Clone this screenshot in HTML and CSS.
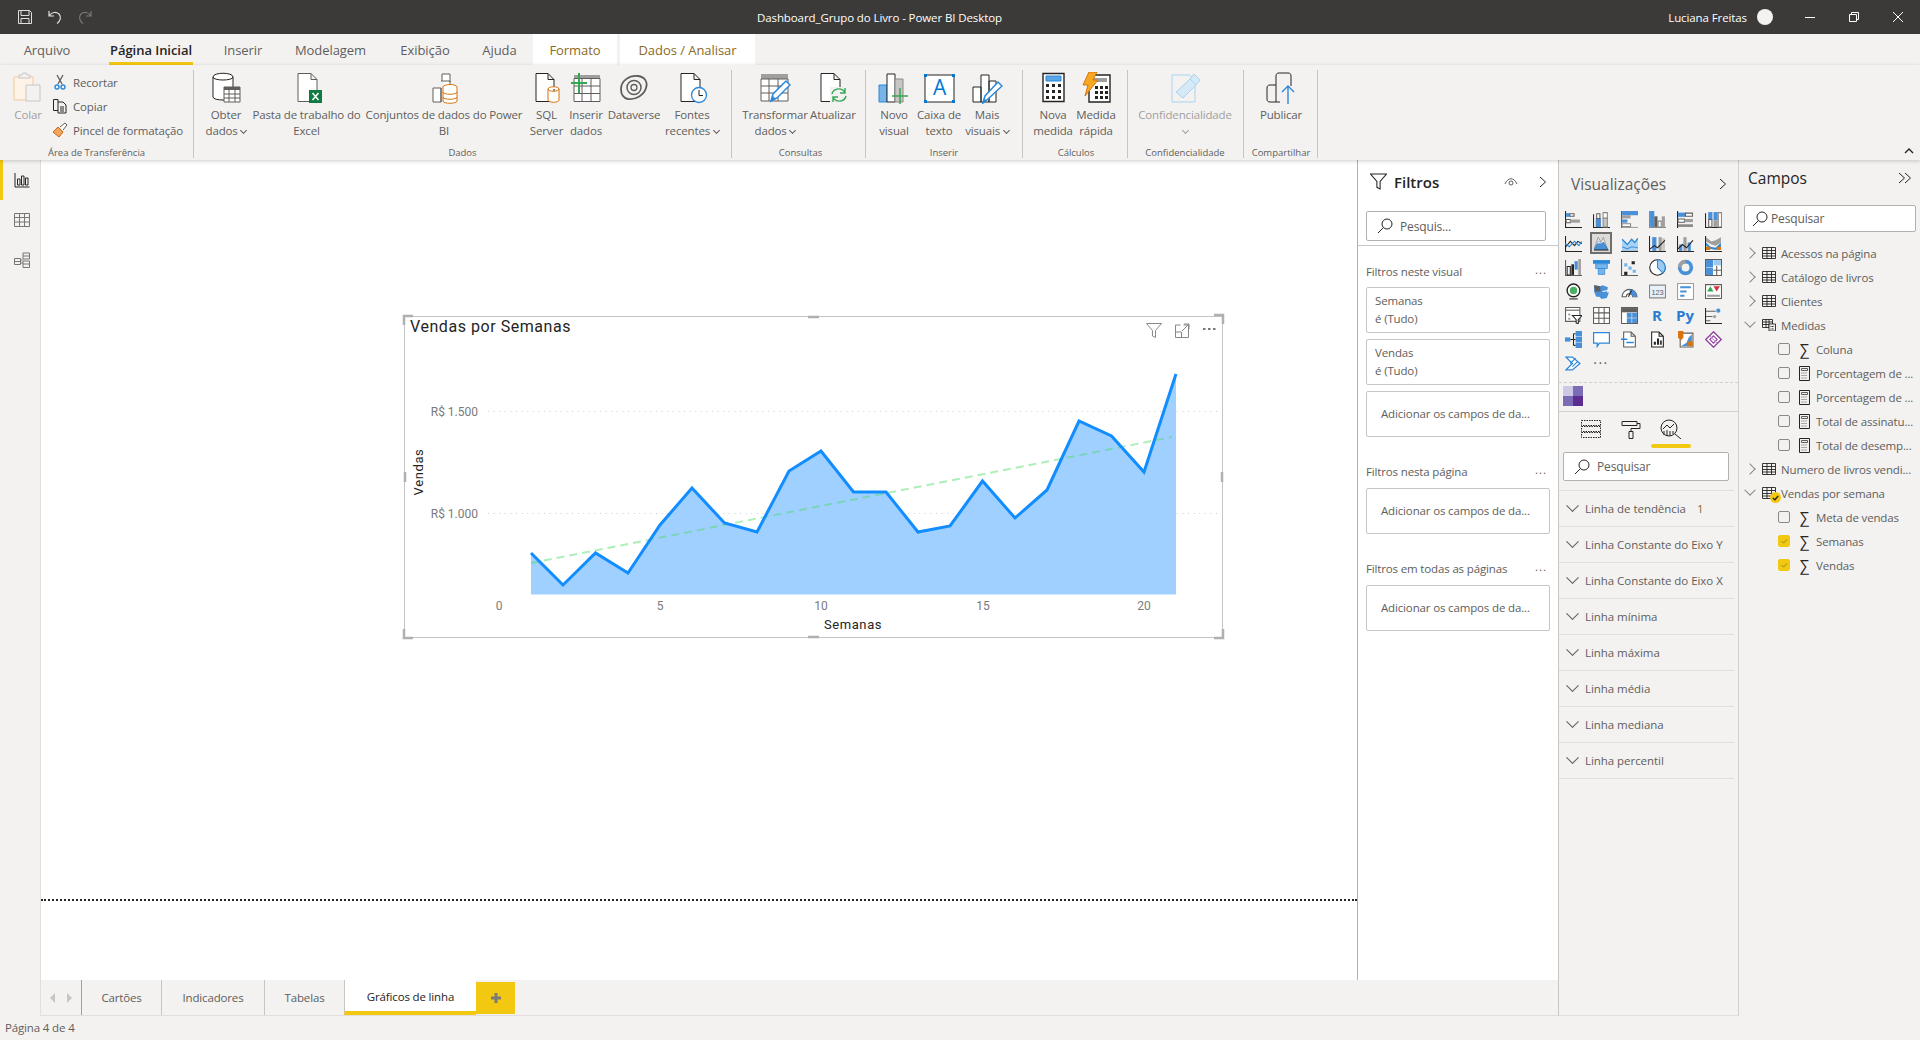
FILE: index.html
```html
<!DOCTYPE html>
<html lang="pt-BR">
<head>
<meta charset="utf-8">
<title>Dashboard_Grupo do Livro - Power BI Desktop</title>
<link rel="stylesheet" href="styles.css">
</head>
<body>
<header class="titlebar">
  <div class="qat">
    <svg class="qi" viewBox="0 0 16 16"><path d="M1.500 1.500h11l2 2v11h-13z M4 1.500v5h8v-5 M4 14.500v-5h8v5" fill="none" stroke="#e1dfdd"/></svg>
    <svg class="qi" viewBox="0 0 16 16"><path d="M2 2v5h5 M2.500 6.500C5 3 9 2.500 12 5c2.500 3 1.500 7-2 9.500" fill="none" stroke="#e1dfdd" stroke-width="1.200"/></svg>
    <svg class="qi" viewBox="0 0 16 16"><path d="M14 2v5H9 M13.500 6.500C11 3 7 2.500 4 5c-2.500 3-1.500 7 2 9.500" fill="none" stroke="#7a7876" stroke-width="1.200"/></svg>
  </div>
  <div class="doc">Dashboard_Grupo do Livro - Power BI Desktop</div>
  <div class="user">Luciana Freitas</div>
  <div class="avatar"></div>
  <div class="winbtns">
    <svg class="wi" viewBox="0 0 12 12"><path d="M1 6.500h10" stroke="#fff" fill="none"/></svg>
    <svg class="wi" viewBox="0 0 12 12"><path d="M1.500 3.500h7v7h-7z M3.500 3.500v-2h7v7h-2" stroke="#fff" fill="none"/></svg>
    <svg class="wi" viewBox="0 0 12 12"><path d="M1 1l10 10M11 1L1 11" stroke="#fff" fill="none"/></svg>
  </div>
</header>

<nav class="tabs">
  <span class="tab t-arq">Arquivo</span>
  <span class="tab t-home">Página Inicial</span>
  <span class="tab t-ins">Inserir</span>
  <span class="tab t-mod">Modelagem</span>
  <span class="tab t-exi">Exibição</span>
  <span class="tab t-aju">Ajuda</span>
  <span class="tab ctx t-for">Formato</span>
  <span class="tab ctx t-dad">Dados / Analisar</span>
</nav>

<section class="ribbon">
  <div class="group g-clip">
    <div class="grow">
      <div class="btn w-colar off">
        <svg class="ic" viewBox="0 0 32 32"><path d="M2 5h19v23H2z" fill="#fdf3e6" stroke="#f0c9a0"/><path d="M7 5V3h3l1-2h3l1 2h3v3H7z" fill="#f3f2f1" stroke="#c8c6c4"/><path d="M14 13h14v16H14z" fill="#f3f2f1" stroke="#c8c6c4"/></svg>
        <span>Colar</span>
      </div>
      <div class="cliplist">
        <div class="clip"><svg class="ci" viewBox="0 0 16 16"><path d="M5 1l5 9M11 1L6 10" stroke="#605e5c" fill="none" stroke-width="1.300"/><circle cx="5" cy="13" r="2" fill="none" stroke="#2b88d8" stroke-width="1.400"/><circle cx="11" cy="13" r="2" fill="none" stroke="#2b88d8" stroke-width="1.400"/></svg><span>Recortar</span></div>
        <div class="clip"><svg class="ci" viewBox="0 0 16 16"><path d="M6 4V1.500H1.500v11H6" fill="none" stroke="#252423"/><path d="M6 4h5l3 3v8H6z M8 9h4M8 11h4M8 13h4" fill="none" stroke="#252423"/></svg><span>Copiar</span></div>
        <div class="clip"><svg class="ci" viewBox="0 0 16 16"><path d="M1 10l5-5 5 5-4 5z" fill="#f2a65a" stroke="#c8641e"/><path d="M8 5l5-4 2 2-4 5" fill="#fff" stroke="#605e5c"/></svg><span>Pincel de formatação</span></div>
      </div>
    </div>
    <div class="glabel">Área de Transferência</div>
  </div>

  <div class="group g-dados">
    <div class="grow">
      <div class="btn w-obter">
        <svg class="ic" viewBox="0 0 32 32"><path d="M3 5c0-5 20-5 20 0v20c0 4-20 4-20 0z" fill="#fff" stroke="#252423"/><path d="M3 5c0 4 20 4 20 0" fill="none" stroke="#252423"/><path d="M14 15h16v15H14z" fill="#fff" stroke="#605e5c"/><path d="M14 15h16v3H14z" fill="#605e5c"/><path d="M19 18v12M25 18v12M14 22h16M14 26h16" stroke="#605e5c" fill="none"/></svg>
        <span>Obter</span><span>dados <i class="caret"></i></span>
      </div>
      <div class="btn w-pasta">
        <svg class="ic" viewBox="0 0 32 32"><path d="M7 1.500h13l6 6v22H7z M20 1.500v6h6" fill="#fff" stroke="#605e5c"/><path d="M18 18h13v13H18z" fill="#107c41"/><path d="M21.500 21l6 7M27.500 21l-6 7" stroke="#fff" stroke-width="1.500"/></svg>
        <span>Pasta de trabalho do</span><span>Excel</span>
      </div>
      <div class="btn w-conj">
        <svg class="ic" viewBox="0 0 32 32"><path d="M5 16h8v14H5z M13 9h9v8 M14 9V2h8v8" fill="#fff" stroke="#605e5c"/><path d="M13 30V16" stroke="#605e5c"/><ellipse cx="22" cy="15" rx="7" ry="2.500" fill="#fff" stroke="#d9730d"/><path d="M15 15v14c0 3 14 3 14 0V15M15 20c0 3 14 3 14 0M15 25c0 3 14 3 14 0" fill="#fff" stroke="#d9730d"/></svg>
        <span>Conjuntos de dados do Power</span><span>BI</span>
      </div>
      <div class="btn w-sql">
        <svg class="ic" viewBox="0 0 32 32"><path d="M5 1.500h12l6 6v22H5z M17 1.500v6h6" fill="#fff" stroke="#252423"/><path d="M17 17c0-3 11-3 11 0v11c0 3-11 3-11 0z M17 17c0 3 11 3 11 0" fill="#fff" stroke="#d9730d"/></svg>
        <span>SQL</span><span>Server</span>
      </div>
      <div class="btn w-ins">
        <svg class="ic" viewBox="0 0 32 32"><path d="M4 3h26v4H4z" fill="#a19f9d"/><path d="M4 6.500h26v23H4z M12 6.500v23M21 6.500v23M4 14h26M4 21.500h26" fill="#fff" stroke="#605e5c"/><path d="M1 11h16M9 1v20" stroke="#33a853" stroke-width="2" fill="none"/></svg>
        <span>Inserir</span><span>dados</span>
      </div>
      <div class="btn w-dat">
        <svg class="ic" viewBox="0 0 32 32"><path d="M3 17C3 9 11 3 20 4c7 1 10 6 8 12-2 7-10 12-18 11-5-1-7-5-7-10z" fill="none" stroke="#605e5c" stroke-width="1.800"/><circle cx="16" cy="15.500" r="7" fill="none" stroke="#605e5c" stroke-width="1.500"/><circle cx="16" cy="15.500" r="3" fill="none" stroke="#605e5c" stroke-width="1.300"/></svg>
        <span>Dataverse</span>
      </div>
      <div class="btn w-fon">
        <svg class="ic" viewBox="0 0 32 32"><path d="M5 1.500h13l6 6v22H5z M18 1.500v6h6" fill="#fff" stroke="#252423"/><circle cx="23" cy="23" r="7.500" fill="#fff" stroke="#2b88d8" stroke-width="1.300"/><path d="M23 18v5.500h4" fill="none" stroke="#252423"/></svg>
        <span>Fontes</span><span>recentes <i class="caret"></i></span>
      </div>
    </div>
    <div class="glabel">Dados</div>
  </div>

  <div class="group g-cons">
    <div class="grow">
      <div class="btn w-tra">
        <svg class="ic" viewBox="0 0 32 32"><path d="M2 2h27v5H2z" fill="#a19f9d"/><path d="M2 7h27v22H2z M10 7v22M19 7v22M2 14h27M2 21h27" fill="#fff" stroke="#605e5c"/><path d="M12 29l2-7 13-13 4 4-13 13z" fill="#fff" stroke="#2b88d8" stroke-width="1.500"/><path d="M12 29l2-5 3 3z" fill="#2b88d8"/></svg>
        <span>Transformar</span><span>dados <i class="caret"></i></span>
      </div>
      <div class="btn w-atu">
        <svg class="ic" viewBox="0 0 32 32"><path d="M4 1.500h13l6 6v22H4z M17 1.500v6h6" fill="#fff" stroke="#252423"/><rect x="13" y="15" width="17" height="16" fill="#f3f2f1"/><path d="M15 22c1-5 8-7 12-3l1 2M29 24c-1 5-8 7-12 3l-1-2M28 16v5h-5M16 30v-5h5" fill="none" stroke="#33a853" stroke-width="1.400"/></svg>
        <span>Atualizar</span>
      </div>
    </div>
    <div class="glabel">Consultas</div>
  </div>

  <div class="group g-ins">
    <div class="grow">
      <div class="btn w-nov">
        <svg class="ic" viewBox="0 0 32 32"><path d="M1 13h8v17H1z" fill="#76b4ea" stroke="#2b88d8"/><path d="M9 2h8v28H9z" fill="#fff" stroke="#252423"/><path d="M17 7h8v23h-8z" fill="#c8c6c4" stroke="#8a8886"/><path d="M14 24h16M22 16v16" stroke="#33a853" stroke-width="1.500"/></svg>
        <span>Novo</span><span>visual</span>
      </div>
      <div class="btn w-cai">
        <svg class="ic" viewBox="0 0 32 32"><path d="M2 3h29v27H2z" fill="#fff" stroke="#252423"/><path d="M1 2h3v3H1zM29 2h3v3h-3zM1 28h3v3H1zM29 28h3v3h-3z" fill="#0078d4"/><text class="ic-a" x="16.500" y="23">A</text></svg>
        <span>Caixa de</span><span>texto</span>
      </div>
      <div class="btn w-mai">
        <svg class="ic" viewBox="0 0 32 32"><path d="M2 15h8v15H2z M10 3h8v27h-8z M18 9h7v21h-7z" fill="#fff" stroke="#252423"/><path d="M12 31l2-7 13-14 4 4-14 13z" fill="#fff" stroke="#2b88d8" stroke-width="1.500"/><path d="M11 31l2-5 3 3z" fill="#2b88d8"/></svg>
        <span>Mais</span><span>visuais <i class="caret"></i></span>
      </div>
    </div>
    <div class="glabel">Inserir</div>
  </div>

  <div class="group g-cal">
    <div class="grow">
      <div class="btn w-nom">
        <svg class="ic" viewBox="0 0 32 32"><path d="M6 1.500h21v28H6z" fill="#fff" stroke="#252423" stroke-width="1.400"/><path d="M9 4h15v5H9z" fill="#5ba4e6" stroke="#2b88d8"/><path d="M9 12h3v3H9zM15 12h3v3h-3zM21 12h3v3h-3zM9 18h3v3H9zM15 18h3v3h-3zM21 18h3v3h-3zM9 24h3v3H9zM15 24h3v3h-3zM21 24h3v3h-3z" fill="#252423"/></svg>
        <span>Nova</span><span>medida</span>
      </div>
      <div class="btn w-med">
        <svg class="ic" viewBox="0 0 32 32"><path d="M9 3h21v27H9z" fill="#fff" stroke="#252423" stroke-width="1.400"/><path d="M13 6h14v4H13z" fill="#a19f9d"/><path d="M15 14h3v3h-3zM20 14h3v3h-3zM25 14h3v3h-3zM15 19h3v3h-3zM20 19h3v3h-3zM25 19h3v3h-3zM15 24h3v3h-3zM20 24h3v3h-3zM25 24h3v3h-3z" fill="#252423"/><path d="M9 0h8l-4 8h5L5 24l3-11H3z" fill="#f7a823" stroke="#d9730d"/></svg>
        <span>Medida</span><span>rápida</span>
      </div>
    </div>
    <div class="glabel">Cálculos</div>
  </div>

  <div class="group g-con">
    <div class="grow">
      <div class="btn w-con off">
        <svg class="ic" viewBox="0 0 32 32"><path d="M3 3h17l6 4v23H3z" fill="#f3f2f1" stroke="#a9d3ef"/><path d="M7 20L21 7l6 6-13 13z" fill="#d6e9f6" stroke="#a9d3ef"/><path d="M21 7l4-5 6 6-4 5z" fill="#d6e9f6" stroke="#a9d3ef"/></svg>
        <span>Confidencialidade</span><span><i class="caret"></i></span>
      </div>
    </div>
    <div class="glabel">Confidencialidade</div>
  </div>

  <div class="group g-sha">
    <div class="grow">
      <div class="btn w-pub">
        <svg class="ic" viewBox="0 0 32 32"><path d="M2 16c0-2 1-3 3-3h6V4c0-2 1-3 3-3h9c2 0 3 1 3 3v26H5c-2 0-3-1-3-3zM11 13v17" fill="none" stroke="#252423"/><rect x="15" y="14" width="15" height="18" fill="#f3f2f1"/><path d="M23 32V14M17 20l6-6 6 6" fill="none" stroke="#2b88d8" stroke-width="1.400"/></svg>
        <span>Publicar</span>
      </div>
    </div>
    <div class="glabel">Compartilhar</div>
  </div>
  <svg class="collapse" viewBox="0 0 10 6"><path d="M1 5l4-4 4 4" fill="none" stroke="#252423" stroke-width="1.400"/></svg>
</section>

<main class="main">
  <aside class="leftnav">
    <div class="nav-item active"><svg class="ni" viewBox="0 0 16 16"><path d="M1 1v14h14.500" fill="none" stroke="#252423"/><path d="M3.500 7h2.500v6H3.500zM7.500 4H10v9H7.500zM11.500 6H14v7h-2.500z" fill="none" stroke="#252423"/></svg></div>
    <div class="nav-item"><svg class="ni" viewBox="0 0 16 16"><path d="M.5 1.500h15v13H.5zM5.500 1.500v13M10.500 1.500v13M.5 5.500h15M.5 10h15" fill="none" stroke="#797775"/></svg></div>
    <div class="nav-item"><svg class="ni" viewBox="0 0 16 16"><path d="M.5 6.500h6v6h-6zM.5 9.500h6M9 1h6.500v6H9zM9 4h6.500M9 9h6.500v6.500H9zM9 12h6.500M6.500 8H9M6.500 11H9" fill="none" stroke="#797775"/></svg></div>
  </aside>

  <div class="center">
    <div class="work">
      <div class="canvas">
        <div class="visual">
          <svg class="chart" viewBox="400 313 828 330">
            <rect class="frame" x="404.500" y="317.500" width="818" height="321"/>
            <text class="ct" x="410" y="333">Vendas por Semanas</text>
            <path class="grid" d="M488 412.500H1218M488 514.500H1218"/>
            <text class="yl" x="478" y="416.500">R$ 1.500</text>
            <text class="yl" x="478" y="518.500">R$ 1.000</text>
            <text class="at" transform="translate(423 473) rotate(-90)">Vendas</text>
            <path class="area" d="M531 554L563 586L595.500 554L628 574L660 526L692 489L724.500 524L757 533L789 472L821 452L853.500 493L886 493L918 533L950 527L982.500 482L1015 519L1047 491L1079 422L1111.500 437L1144 473L1176 375V595.500H531Z"/>
            <path class="trend" d="M531 564L1172 438"/>
            <path class="line" d="M531 554L563 586L595.500 554L628 574L660 526L692 489L724.500 524L757 533L789 472L821 452L853.500 493L886 493L918 533L950 527L982.500 482L1015 519L1047 491L1079 422L1111.500 437L1144 473L1176 375"/>
            <text class="xl" x="499" y="611">0</text>
            <text class="xl" x="660" y="611">5</text>
            <text class="xl" x="821" y="611">10</text>
            <text class="xl" x="983" y="611">15</text>
            <text class="xl" x="1144" y="611">20</text>
            <text class="at" x="853" y="630">Semanas</text>
            <path class="vi" d="M1146.500 324.500h15l-6 7v7l-3-1.500v-5.500z"/>
            <path class="vi" d="M1175.500 326v12.500h13v-12.500h-5M1175.500 326h5M1175.500 333h6v5.500M1182 332l6.500-6.500M1184 325h5v5"/>
            <path class="dots" d="M1203 330h2.500M1208 330h2.500M1213 330h2.500"/>
            <path class="hnd" d="M404 326v-9h9M1214 316h9v9M1223 630v9h-9M413 639h-9v-9" />
            <path class="hnd" d="M808 318h11M808 638h11M405 473v10M1222 473v10"/>
          </svg>
        </div>
        <div class="pageline"></div>
      </div>
      <aside class="filters">
        <div class="f-head">
          <svg class="f-fun" viewBox="0 0 16 16"><path d="M.5 1h15l-6 7v7l-3-1.500V8z" fill="none" stroke="#252423"/></svg>
          <span class="f-title">Filtros</span>
          <svg class="f-eye" viewBox="0 0 14 10"><path d="M1 7c3-7 9-7 12 0" fill="none" stroke="#605e5c"/><circle cx="7" cy="6" r="2" fill="none" stroke="#605e5c"/></svg>
          <svg class="chev" viewBox="0 0 8 12"><path d="M1 1l5.500 5L1 11" fill="none" stroke="#252423"/></svg>
        </div>
        <div class="search f-search">
          <svg class="mag" viewBox="0 0 16 16"><circle cx="10" cy="6" r="5" fill="none" stroke="#252423"/><path d="M6.500 9.500L1 15" stroke="#252423" fill="none"/></svg>
          <span>Pesquis...</span>
        </div>
        <div class="f-body">
          <div class="f-sec"><span>Filtros neste visual</span><i class="more">...</i></div>
          <div class="f-card"><span>Semanas</span><span>é (Tudo)</span></div>
          <div class="f-card"><span>Vendas</span><span>é (Tudo)</span></div>
          <div class="f-card add">Adicionar os campos de da...</div>
          <div class="f-sec s2"><span>Filtros nesta página</span><i class="more">...</i></div>
          <div class="f-card add">Adicionar os campos de da...</div>
          <div class="f-sec s3"><span>Filtros em todas as páginas</span><i class="more">...</i></div>
          <div class="f-card add">Adicionar os campos de da...</div>
        </div>
      </aside>
    </div>
    <div class="pagetabs">
      <div class="arrows"><i class="al"></i><i class="ar"></i></div>
      <div class="ptab p1">Cartões</div>
      <div class="ptab p2">Indicadores</div>
      <div class="ptab p3">Tabelas</div>
      <div class="ptab p4">Gráficos de linha</div>
      <div class="padd"><svg viewBox="0 0 12 12"><path d="M6 1v10M1 6h10" stroke="#7a7a78" stroke-width="3"/></svg></div>
    </div>
  </div>

  <aside class="viz">
    <div class="v-head"><span>Visualizações</span><svg class="chev" viewBox="0 0 8 12"><path d="M1 1l5.500 5L1 11" fill="none" stroke="#252423"/></svg></div>
    <div class="v-grid">
      <div class="vc"><svg viewBox="0 0 16 16"><path d="M.5 0v15.500H16" stroke="#252423" fill="none"/><path d="M1 2h3.500v3.500H1z" fill="#4a90d9"/><path d="M4.500 2.500H8.500v2.500H4.500z" fill="#fff" stroke="#605e5c"/><path d="M1 8h4v3H1z" fill="#fff" stroke="#605e5c"/><path d="M5 8h9v3H5z" fill="#a19f9d"/></svg></div>
      <div class="vc"><svg viewBox="0 0 16 16"><path d="M0 15.500h16M.5 3v12" stroke="#252423" fill="none"/><path d="M3 7h4v8H3z" fill="#4a90d9" stroke="#2b6cb0" stroke-width=".6"/><path d="M3.500 2.500h3V7h-3z" fill="#fff" stroke="#605e5c"/><path d="M9.500 6.500h4v8.500h-4z" fill="#c8c6c4" stroke="#8a8886"/><path d="M9.500 1.500h4v5h-4z" fill="#fff" stroke="#8a8886"/></svg></div>
      <div class="vc"><svg viewBox="0 0 16 16"><path d="M.5 0v16" stroke="#605e5c"/><path d="M1 0h15v4H1z" fill="#4a90d9"/><path d="M1 4h8v3H1z" fill="#a19f9d"/><path d="M1 8h5v3H1z" fill="#4a90d9"/><path d="M1 12h8v2.500H1z" fill="#fff" stroke="#8a8886"/><path d="M1 15h15v1H1z" fill="#a19f9d"/></svg></div>
      <div class="vc"><svg viewBox="0 0 16 16"><path d="M0 0h1v16H0zM0 15h16v1H0z" fill="#8a8886"/><path d="M1 0h4v15H1z" fill="#4a90d9"/><path d="M5 5h3v10H5z" fill="#605e5c"/><path d="M8.500 9.500h3V15h-3z" fill="#fff" stroke="#8a8886"/><path d="M12 5h3v10h-3z" fill="#a19f9d"/></svg></div>
      <div class="vc"><svg viewBox="0 0 16 16"><path d="M.5 0v16" stroke="#252423"/><path d="M1 1.500h7v4H1z" fill="#4a90d9"/><path d="M8 2h6.500v3H8z" fill="#fff" stroke="#605e5c"/><path d="M1 7.500h6v3H1z" fill="#fff" stroke="#605e5c"/><path d="M7 7.500h8v3H7z" fill="#a19f9d"/><path d="M1 12.500h14V15H1z" fill="#8a8886"/></svg></div>
      <div class="vc"><svg viewBox="0 0 16 16"><path d="M.5 2v14M0 15.500h16" stroke="#252423" fill="none"/><path d="M3 1h4v7H3z" fill="#4a90d9"/><path d="M3.500 8h3v7h-3z" fill="#fff" stroke="#605e5c"/><path d="M8 1h4v8H8z" fill="#4a90d9"/><path d="M8 9h4v6H8z" fill="#a19f9d"/><path d="M12.500 1.500h3V15h-3z" fill="#fff" stroke="#8a8886"/></svg></div>

      <div class="vc"><svg viewBox="0 0 16 16"><path d="M.5 1v14.500H16" stroke="#252423" fill="none"/><path d="M0 12l5-6 4 4 3-4 4 2" fill="none" stroke="#252423"/><path d="M0 8l4 3 5-5 4 4 3-4" fill="none" stroke="#2b88d8"/></svg></div>
      <div class="vc sel"><svg viewBox="0 0 16 16"><path d="M.5 15L5 2l3 5 2.500-5L15 15z" fill="#eee" stroke="#8a8886" stroke-width=".8"/><path d="M.5 15l5-9 3 3 2-2 5 8z" fill="#4a90d9" stroke="#2b6cb0" stroke-width=".7"/><path d="M5.500 6L4 9l2-1 2 1z" fill="#fff"/><path d="M0 15.500h16" stroke="#252423"/></svg></div>
      <div class="vc"><svg viewBox="0 0 16 16"><path d="M1 4l5 5 4-5 3 3 3-4v12H1z" fill="#a9d3f5"/><path d="M1 4l5 5 4-5 3 3 3-4" fill="none" stroke="#2b88d8" stroke-width="1.200"/><path d="M1 11l5 2 4-2 6 1" fill="none" stroke="#4a90d9"/><path d="M0 15.500h16" stroke="#252423"/></svg></div>
      <div class="vc"><svg viewBox="0 0 16 16"><path d="M.5 1v14.500H16" stroke="#252423" fill="none"/><path d="M3 2h4v13H3z" fill="#4a90d9"/><path d="M9 2h3v13H9z" fill="#a19f9d"/><path d="M12.500 3h2.500v12h-2.500z" fill="#c8c6c4"/><path d="M0 14l5-4 3 2 7-7" fill="none" stroke="#252423"/></svg></div>
      <div class="vc"><svg viewBox="0 0 16 16"><path d="M.5 1v14.500H16" stroke="#252423" fill="none"/><path d="M2 9h3v6H2z" fill="#4a90d9"/><path d="M6 2h3v13H6z" fill="#a19f9d"/><path d="M10 7h3v8h-3z" fill="#4a90d9"/><path d="M0 14l5-5 4 3 6-7" fill="none" stroke="#252423"/></svg></div>
      <div class="vc"><svg viewBox="0 0 16 16"><path d="M.5 1v14.500H16" stroke="#252423" fill="none"/><path d="M1 2l5 4 4-1 5-3v5l-5 3-4-1-5-3z" fill="#a19f9d"/><path d="M1 7l4 4 5 1 5-5v4l-5 3-5-1-4-3z" fill="#2b88d8"/><path d="M1 11h4v3H1zM11 11h4v3h-4z" fill="#d9730d"/></svg></div>

      <div class="vc"><svg viewBox="0 0 16 16"><path d="M.5 1v14.500H16" stroke="#605e5c" fill="none"/><path d="M2 7h3v8H2z" fill="none" stroke="#252423"/><path d="M6 5h2.500v10H6z" fill="#252423"/><path d="M9 2h3v8H9z" fill="#4a90d9"/><path d="M12.500 0H15v15h-2.500z" fill="#a19f9d"/></svg></div>
      <div class="vc"><svg viewBox="0 0 16 16"><path d="M0 1h16v3.500H0z" fill="#2b88d8"/><path d="M2.500 4.500h11V9h-11z" fill="#76b4ea" stroke="#2b88d8" stroke-width=".7"/><path d="M5 9h6v5.500H5z" fill="#76b4ea" stroke="#2b88d8" stroke-width=".7"/></svg></div>
      <div class="vc"><svg viewBox="0 0 16 16"><path d="M.5 0v15.500H16" stroke="#605e5c" fill="none"/><path d="M10 2h3v3h-3zM3 12h3v3H3z" fill="#252423"/><path d="M3 4h3v3H3zM7 7h3v3H7zM11 10h3v3h-3z" fill="#76b4ea"/></svg></div>
      <div class="vc"><svg viewBox="0 0 16 16"><circle cx="8" cy="8" r="7.300" fill="#fff" stroke="#252423"/><path d="M8 8V.7a7.300 7.300 0 0 1 5 12.500z" fill="#9cc9f0" stroke="#2b88d8"/></svg></div>
      <div class="vc"><svg viewBox="0 0 16 16"><circle cx="8" cy="8" r="5.500" fill="none" stroke="#4a90d9" stroke-width="3.500"/><path d="M2.500 8A5.500 5.500 0 0 1 8 2.500" fill="none" stroke="#a19f9d" stroke-width="3.500"/></svg></div>
      <div class="vc"><svg viewBox="0 0 16 16"><path d="M.5.500h15v15H.5z" fill="#fff" stroke="#605e5c"/><path d="M1 1h6.500v7H1zM1 8.500h6.500V15H1z" fill="#4a90d9"/><path d="M8 1h7v5H8z" fill="#9cc9f0"/><path d="M11 6.500V15M8 10.500h7" stroke="#605e5c"/></svg></div>

      <div class="vc"><svg viewBox="0 0 16 16"><circle cx="8" cy="7" r="6" fill="#fff" stroke="#252423" stroke-width="1.300"/><circle cx="8" cy="7" r="3.500" fill="#4caf63"/><path d="M4 15h8" stroke="#252423"/></svg></div>
      <div class="vc"><svg viewBox="0 0 16 16"><path d="M1 2l6 1 2-1 5 2-1 5h2l-2 5-5 1-2-2-3 0-2-5z" fill="#4a90d9"/><path d="M1 2l6 1v5H2z" fill="#605e5c"/><path d="M9 8l5-1" stroke="#fff"/></svg></div>
      <div class="vc"><svg viewBox="0 0 16 16"><path d="M1 13a7 7 0 0 1 14 0h-4a3 3 0 0 0-6 0z" fill="#fff" stroke="#605e5c"/><path d="M8 6a7 7 0 0 1 7 7h-4a3 3 0 0 0-3-3z" fill="#4a90d9"/><path d="M7 13l3-6" stroke="#252423"/></svg></div>
      <div class="vc"><svg viewBox="0 0 16 16"><path d="M.5 2h15v12H.5z" fill="#e6f1fa" stroke="#8a8886"/><text class="vt123" x="8" y="11">123</text></svg></div>
      <div class="vc"><svg viewBox="0 0 16 16"><path d="M.5.500h15v15H.5z" fill="#fff" stroke="#a19f9d"/><path d="M3 3h10v2H3zM3 7h6v2H3zM3 11h4v2H3z" fill="#4a90d9"/></svg></div>
      <div class="vc"><svg viewBox="0 0 16 16"><path d="M.5 1.500h15v13H.5z" fill="#fff" stroke="#605e5c"/><path d="M2 8l3-5 3 5z" fill="#33a853"/><path d="M8 3h6l-3 5z" fill="#d13438"/><path d="M2 11h12v2H2z" fill="#a19f9d"/></svg></div>

      <div class="vc"><svg viewBox="0 0 16 16"><path d="M.5.500H14v13H.5z" fill="#fff" stroke="#605e5c"/><path d="M.5 3h13.500" stroke="#605e5c"/><path d="M3 6h2v2H3zM3 10h2v2H3z" fill="#a19f9d"/><path d="M7 8h9l-3.500 4v4l-2-1v-3z" fill="#fff" stroke="#252423"/></svg></div>
      <div class="vc"><svg viewBox="0 0 16 16"><path d="M.5.500h15v15H.5zM5.500.5v15M10.500.5v15M.5 5.500h15M.5 10.500h15" fill="#fff" stroke="#605e5c"/></svg></div>
      <div class="vc"><svg viewBox="0 0 16 16"><path d="M.5.500h15v15H.5z" fill="#fff" stroke="#605e5c"/><path d="M1 1h14v4H1z" fill="#605e5c"/><path d="M5.500 5.500h4.500v4.500H5.500zM10.500 5.500H15V10h-4.500zM5.500 10.500h4.500V15H5.500zM10.500 10.500H15V15h-4.500z" fill="#4a90d9"/></svg></div>
      <div class="vc"><span class="vr">R</span></div>
      <div class="vc"><span class="vr">Py</span></div>
      <div class="vc"><svg viewBox="0 0 16 16"><path d="M.5 1v14.500H16" stroke="#252423" fill="none"/><path d="M1 4h9M1 9h6M1 13h4" stroke="#605e5c"/><circle cx="12.500" cy="3.500" r="2" fill="#4a90d9"/><circle cx="9" cy="9" r="1.500" fill="#a19f9d"/></svg></div>

      <div class="vc"><svg viewBox="0 0 16 16"><path d="M0 6h5v4H0z" fill="#4a90d9"/><path d="M5 8h3M8 2.500v11M8 2.500h2M8 8h2M8 13.500h2" stroke="#252423" fill="none"/><path d="M10 0h6v5h-6zM10 5.500h6v5h-6zM10 11h6v5h-6z" fill="#4a90d9"/></svg></div>
      <div class="vc"><svg viewBox="0 0 16 16"><path d="M.5 1.500h15v10H6l-2 3v-3H.5z" fill="#fff" stroke="#2b88d8" stroke-width="1.200"/></svg></div>
      <div class="vc"><svg viewBox="0 0 16 16"><path d="M2.500 1h7l4 4v10h-11z M9.500 1v4h4" fill="#fff" stroke="#605e5c"/><path d="M0 7h6v1.500H0z M5 10h7v1.500H5z" fill="#2b88d8"/></svg></div>
      <div class="vc"><svg viewBox="0 0 16 16"><path d="M2.500 1h7l4 4v10h-11z M9.500 1v4h4" fill="#fff" stroke="#252423"/><path d="M4.500 10h2v3h-2zM7.500 7h2v6h-2zM10.500 9h1.500v4h-1.500z" fill="#252423"/></svg></div>
      <div class="vc"><svg viewBox="0 0 16 16"><path d="M3 2h12v13H3z" fill="#fff" stroke="#605e5c"/><path d="M4 14l5-3 2-5 3-3v11z" fill="#4a90d9"/><path d="M1 0h5v6L3.500 9 1 6z" fill="#d9730d"/><circle cx="12.500" cy="12" r="2.500" fill="#d9730d"/></svg></div>
      <div class="vc"><svg viewBox="0 0 16 16"><path d="M8 .7L15.300 8 8 15.300.7 8z" fill="#fff" stroke="#8e3f9e" stroke-width="1.200"/><path d="M8 4.500L11.500 8 8 11.500 4.500 8z" fill="none" stroke="#8e3f9e"/><path d="M4.500 4.500l7 7" stroke="#c48bcf"/></svg></div>

      <div class="vc"><svg viewBox="0 0 16 16"><path d="M1 2h6l7 6-7 6H1l6-6z" fill="#fff" stroke="#2b88d8" stroke-width="1.200"/><path d="M5 8l5-5M7 11l5-5" stroke="#2b88d8"/></svg></div>
      <div class="vc"><span class="vdots">...</span></div>
    </div>
    <div class="v-dash"></div>
    <div class="v-apps">
      <div class="sq s1"></div><div class="sq s2"></div><div class="sq s3"></div><div class="sq s4"></div>
    </div>
    <div class="v-tabs">
      <div class="vt"><svg viewBox="0 0 22 20"><path d="M1.500 1.500h19v5h-19zM1.500 7.500h19v5h-19zM1.500 13.500h19v5h-19z" fill="none" stroke="#252423" stroke-dasharray="1.500 1"/></svg></div>
      <div class="vt"><svg viewBox="0 0 22 20"><path d="M2 2.500h15v4H2z M17 4.500h3v5H11v3" fill="none" stroke="#252423"/><path d="M9 12.500h4v7H9z" fill="none" stroke="#252423"/></svg></div>
      <div class="vt on"><svg viewBox="0 0 22 20"><circle cx="9" cy="9" r="8" fill="none" stroke="#252423"/><path d="M15 15l6 5" stroke="#252423"/><path d="M3 10l4-4 3 3 4-4" fill="none" stroke="#252423"/><path d="M4 12v4M7 11v6M10 12v5M13 12v3" stroke="#252423"/></svg></div>
    </div>
    <div class="search v-search">
      <svg class="mag" viewBox="0 0 16 16"><circle cx="10" cy="6" r="5" fill="none" stroke="#252423"/><path d="M6.500 9.500L1 15" stroke="#252423" fill="none"/></svg>
      <span>Pesquisar</span>
    </div>
    <div class="v-list">
      <div class="v-row"><i class="dn"></i><span>Linha de tendência</span><b class="cnt">1</b></div>
      <div class="v-row"><i class="dn"></i><span>Linha Constante do Eixo Y</span></div>
      <div class="v-row"><i class="dn"></i><span>Linha Constante do Eixo X</span></div>
      <div class="v-row"><i class="dn"></i><span>Linha mínima</span></div>
      <div class="v-row"><i class="dn"></i><span>Linha máxima</span></div>
      <div class="v-row"><i class="dn"></i><span>Linha média</span></div>
      <div class="v-row"><i class="dn"></i><span>Linha mediana</span></div>
      <div class="v-row"><i class="dn"></i><span>Linha percentil</span></div>
    </div>
  </aside>

  <aside class="fields">
    <div class="c-head"><span>Campos</span><svg class="dbl" viewBox="0 0 14 12"><path d="M1 1l5.500 5L1 11M7 1l5.500 5L7 11" fill="none" stroke="#252423"/></svg></div>
    <div class="search c-search">
      <svg class="mag" viewBox="0 0 16 16"><circle cx="10" cy="6" r="5" fill="none" stroke="#252423"/><path d="M6.500 9.500L1 15" stroke="#252423" fill="none"/></svg>
      <span>Pesquisar</span>
    </div>
    <ul class="tree">
      <li class="t"><i class="rt"></i><svg class="tb" viewBox="0 0 14 12"><path d="M.5.500h13v11H.5zM.5 3.500h13M.5 6.500h13M.5 9h13M5 .5v11M9.500.5v11" fill="none" stroke="#252423" stroke-width=".9"/></svg><span>Acessos na página</span></li>
      <li class="t"><i class="rt"></i><svg class="tb" viewBox="0 0 14 12"><path d="M.5.500h13v11H.5zM.5 3.500h13M.5 6.500h13M.5 9h13M5 .5v11M9.500.5v11" fill="none" stroke="#252423" stroke-width=".9"/></svg><span>Catálogo de livros</span></li>
      <li class="t"><i class="rt"></i><svg class="tb" viewBox="0 0 14 12"><path d="M.5.500h13v11H.5zM.5 3.500h13M.5 6.500h13M.5 9h13M5 .5v11M9.500.5v11" fill="none" stroke="#252423" stroke-width=".9"/></svg><span>Clientes</span></li>
      <li class="t"><i class="dnt"></i><svg class="tb" viewBox="0 0 14 12"><path d="M.5.500h10v8H.5zM.5 3h10M.5 5.500h10M4 .5v8M7 .5v8" fill="none" stroke="#252423" stroke-width=".9"/><path d="M7 5h6.500v7H7z" fill="#f3f2f1" stroke="#252423" stroke-width=".9"/><path d="M8.500 7.500h3.500M8.500 10h3.500" stroke="#252423" stroke-dasharray="1 .5"/></svg><span>Medidas</span></li>
      <li class="s"><i class="cb"></i><span class="sig">∑</span><span>Coluna</span></li>
      <li class="s"><i class="cb"></i><svg class="calc" viewBox="0 0 11 15"><path d="M.5.500h10v14H.5z" fill="none" stroke="#252423"/><path d="M2.500 2.500h6v2h-6z" fill="none" stroke="#605e5c"/><path d="M2.500 7h6M2.500 9.500h6M2.500 12h6" stroke="#605e5c" stroke-dasharray="1 1"/></svg><span>Porcentagem de ...</span></li>
      <li class="s"><i class="cb"></i><svg class="calc" viewBox="0 0 11 15"><path d="M.5.500h10v14H.5z" fill="none" stroke="#252423"/><path d="M2.500 2.500h6v2h-6z" fill="none" stroke="#605e5c"/><path d="M2.500 7h6M2.500 9.500h6M2.500 12h6" stroke="#605e5c" stroke-dasharray="1 1"/></svg><span>Porcentagem de ...</span></li>
      <li class="s"><i class="cb"></i><svg class="calc" viewBox="0 0 11 15"><path d="M.5.500h10v14H.5z" fill="none" stroke="#252423"/><path d="M2.500 2.500h6v2h-6z" fill="none" stroke="#605e5c"/><path d="M2.500 7h6M2.500 9.500h6M2.500 12h6" stroke="#605e5c" stroke-dasharray="1 1"/></svg><span>Total de assinatu...</span></li>
      <li class="s"><i class="cb"></i><svg class="calc" viewBox="0 0 11 15"><path d="M.5.500h10v14H.5z" fill="none" stroke="#252423"/><path d="M2.500 2.500h6v2h-6z" fill="none" stroke="#605e5c"/><path d="M2.500 7h6M2.500 9.500h6M2.500 12h6" stroke="#605e5c" stroke-dasharray="1 1"/></svg><span>Total de desemp...</span></li>
      <li class="t"><i class="rt"></i><svg class="tb" viewBox="0 0 14 12"><path d="M.5.500h13v11H.5zM.5 3.500h13M.5 6.500h13M.5 9h13M5 .5v11M9.500.5v11" fill="none" stroke="#252423" stroke-width=".9"/></svg><span>Numero de livros vendi...</span></li>
      <li class="t"><i class="dnt"></i><span class="tbwrap"><svg class="tb" viewBox="0 0 14 12"><path d="M.5.500h13v11H.5zM.5 3.500h13M.5 6.500h13M.5 9h13M5 .5v11M9.500.5v11" fill="none" stroke="#252423" stroke-width=".9"/></svg><i class="badge"><svg viewBox="0 0 10 10"><path d="M2.500 5.500l2 1.500 3-3.500" fill="none" stroke="#252423" stroke-width="1.300"/></svg></i></span><span>Vendas por semana</span></li>
      <li class="s"><i class="cb"></i><span class="sig">∑</span><span>Meta de vendas</span></li>
      <li class="s"><i class="cb ck"><svg viewBox="0 0 12 12"><path d="M3 6l2.500 2.500L9.500 4" fill="none" stroke="#8a7a3a"/></svg></i><span class="sig">∑</span><span>Semanas</span></li>
      <li class="s"><i class="cb ck"><svg viewBox="0 0 12 12"><path d="M3 6l2.500 2.500L9.500 4" fill="none" stroke="#8a7a3a"/></svg></i><span class="sig">∑</span><span>Vendas</span></li>
    </ul>
  </aside>
</main>

<footer class="status">Página 4 de 4</footer>
</body>
</html>
```

FILE: styles.css
```css
* { box-sizing: border-box; }
html, body { margin: 0; height: 100%; }
body {
  width: 1920px; height: 1040px; overflow: hidden;
  display: flex; flex-direction: column;
  background: #f3f2f1; color: #605e5c;
  font-family: "Open Sans", "Noto Sans", "Liberation Sans", sans-serif;
  font-size: 11.5px; letter-spacing: -.15px;
}
i { font-style: normal; }

/* title bar */
.titlebar { height: 34px; flex: none; background: #3b3a39; color: #fff; display: flex; align-items: center; font-size: 11.5px; letter-spacing: -.1px; }
.qat { width: 757px; display: flex; gap: 14px; padding-left: 17px; }
.qi { width: 16px; height: 16px; }
.user { margin-left: auto; }
.avatar { width: 16px; height: 16px; border-radius: 50%; background: #f3f2f1; margin: 0 31px 0 10px; }
.winbtns { display: flex; gap: 32px; padding-right: 16px; }
.wi { width: 12px; height: 12px; }

/* ribbon tabs */
.tabs { height: 31px; flex: none; display: flex; align-items: stretch; font-size: 13px; color: #605e5c; position: relative; z-index: 2; letter-spacing: -.05px; }
.tab { display: flex; align-items: center; justify-content: center; height: 31px; white-space: nowrap; }
.t-arq { margin-left: 23px; width: 48px; }
.t-home { margin-left: 38px; width: 84px; color: #252423; font-weight: 600; border-bottom: 3px solid #f2c811; padding-top: 3px; }
.t-ins { margin-left: 31px; width: 38px; }
.t-mod { margin-left: 32px; width: 73px; }
.t-exi { margin-left: 33px; width: 50px; }
.t-aju { margin-left: 32px; width: 35px; }
.ctx { background: #fff; color: #8a6a1f; }
.t-for { margin-left: 16px; width: 84px; }
.t-dad { margin-left: 3px; width: 135px; }

/* ribbon */
.ribbon { height: 95px; flex: none; display: flex; position: relative; z-index: 2; padding-top: 5px; box-shadow: 0 1px 4px rgba(0,0,0,.2); background: #f3f2f1; }
.group { height: 88px; display: flex; flex-direction: column; border-right: 1px solid #c8c6c4; position: relative; }
.grow { flex: 1; display: flex; align-items: flex-start; }
.glabel { height: 11px; text-align: center; font-size: 9.5px; line-height: 11px; color: #605e5c; letter-spacing: 0; }
.g-clip { width: 194px; }
.g-dados { width: 538px; padding-left: 6px; }
.g-cons { width: 134px; padding-left: 10px; }
.g-ins { width: 157px; padding-left: 6px; }
.g-cal { width: 105px; padding-left: 8px; }
.g-con { width: 116px; padding-left: 5px; }
.g-sha { width: 74px; padding-left: 7px; }
.g-dados .glabel, .g-cons .glabel, .g-ins .glabel, .g-cal .glabel, .g-con .glabel, .g-sha .glabel { margin-left: -6px; }
.btn { display: flex; flex-direction: column; align-items: center; white-space: nowrap; line-height: 16px; color: #605e5c; flex: none; }
.ic { width: 32px; height: 32px; margin: 2px 0 3px; flex: none; }
.off { color: #a19f9d; }
.caret { display: inline-block; width: 5px; height: 5px; border: solid currentColor; border-width: 0 1px 1px 0; transform: rotate(45deg); margin: 0 0 2px 1px; }
.w-colar { width: 40px; margin-left: 8px; }
.w-obter { width: 52px; }
.w-pasta { width: 109px; }
.w-conj { width: 166px; }
.w-sql { width: 39px; }
.w-ins { width: 40px; }
.w-dat { width: 56px; }
.w-fon { width: 60px; }
.w-tra { width: 66px; }
.w-atu { width: 50px; }
.w-nov { width: 44px; }
.w-cai { width: 46px; }
.w-mai { width: 50px; }
.w-nom { width: 44px; }
.w-med { width: 42px; }
.w-con { width: 104px; }
.w-pub { width: 60px; }
.ic-a { font-size: 21px; fill: #0078d4; text-anchor: middle; }
.cliplist { display: flex; flex-direction: column; gap: 8px; margin: 4px 0 0 4px; }
.clip { display: flex; align-items: center; gap: 5px; height: 16px; white-space: nowrap; }
.ci { width: 16px; height: 16px; flex: none; }
.collapse { position: absolute; right: 6px; bottom: 6px; width: 10px; height: 6px; }

/* main */
.main { flex: 1; display: flex; min-height: 0; }
.leftnav { width: 41px; flex: none; border-right: 1px solid #e1dfdd; display: flex; flex-direction: column; }
.nav-item { height: 40px; display: flex; align-items: center; justify-content: center; border-left: 3px solid transparent; }
.nav-item.active { border-left-color: #f2c811; }
.ni { width: 16px; height: 16px; }
.center { width: 1517px; flex: none; display: flex; flex-direction: column; }
.work { flex: 1; display: flex; min-height: 0; }
.canvas { flex: 1; background: #fff; position: relative; }
.visual { position: absolute; left: 359px; top: 152px; width: 828px; height: 330px; }
.chart { display: block; width: 828px; height: 330px; font-family: Roboto, "Noto Sans", sans-serif; letter-spacing: 0; }
.frame { fill: none; stroke: #c4c4c4; }
.ct { font-size: 16px; fill: #252423; letter-spacing: .55px; }
.grid { stroke: #ccc; stroke-dasharray: 1 4.6; fill: none; }
.yl { font-size: 12px; fill: #7a7a7a; text-anchor: end; }
.xl { font-size: 12px; fill: #7a7a7a; text-anchor: middle; }
.at { font-size: 13px; fill: #252423; text-anchor: middle; letter-spacing: .6px; }
.area { fill: #a0d0ff; }
.line { fill: none; stroke: #118dff; stroke-width: 3; }
.trend { fill: none; stroke: #4cd964; stroke-opacity: .45; stroke-width: 2; stroke-dasharray: 8 5; }
.vi { fill: none; stroke: #8a8886; }
.dots { fill: none; stroke: #7a7876; stroke-width: 2; }
.hnd { fill: none; stroke: #b0b0b0; stroke-width: 2.5; }
.pageline { position: absolute; left: 0; right: 0; top: 739px; border-top: 2px dotted #252423; }

/* filters */
.filters { width: 201px; flex: none; background: #fff; border-left: 1px solid #b3b0ad; display: flex; flex-direction: column; }
.f-head { height: 51px; display: flex; align-items: center; padding: 0 11px 8px 12px; flex: none; }
.f-fun { width: 17px; height: 17px; }
.f-title { font-size: 15px; font-weight: 600; color: #252423; margin-left: 7px; letter-spacing: 0; }
.f-eye { width: 14px; height: 10px; margin-left: auto; margin-right: 21px; }
.chev { width: 8px; height: 12px; flex: none; }
.search { display: flex; align-items: center; border: 1px solid #b3b0ad; border-radius: 2px; background: #fff; font-size: 12px; color: #605e5c; flex: none; }
.mag { width: 16px; height: 16px; margin: 0 7px 0 10px; flex: none; }
.f-search { margin: 0 0 0 8px; width: 180px; height: 30px; }
.f-body { flex: 1; border-top: 1px solid #c8c6c4; margin-top: 4px; padding: 0 8px; display: flex; flex-direction: column; }
.f-sec { height: 41px; padding-top: 18px; display: flex; justify-content: space-between; align-items: flex-start; line-height: 16px; flex: none; }
.f-sec.s2, .f-sec.s3 { height: 45px; padding-top: 21px; }
.more { letter-spacing: 1px; line-height: 12px; margin-right: 3px; }
.f-card { border: 1px solid #c8c6c4; border-radius: 2px; height: 46px; padding: 5px 8px; display: flex; flex-direction: column; justify-content: center; line-height: 18px; flex: none; margin-bottom: 6px; }
.f-card.add { padding: 0 14px; }

/* page tabs */
.pagetabs { height: 36px; flex: none; display: flex; align-items: stretch; border-bottom: 1px solid #e1dfdd; background: #f3f2f1; border-left: 1px solid #e1dfdd; margin-left: -1px; }
.arrows { width: 40px; display: flex; align-items: center; justify-content: space-around; padding: 0 3px; }
.al, .ar { border: 5px solid transparent; width: 0; height: 0; }
.al { border-right: 5px solid #c8c6c4; border-left: 0; }
.ar { border-left: 5px solid #c8c6c4; border-right: 0; }
.ptab { display: flex; align-items: center; justify-content: center; border-left: 1px solid #a19f9d; font-size: 11.5px; }
.p1 { width: 80px; }
.p2 { width: 103px; border-left-color: #c8c6c4; }
.p3 { width: 80px; border-left-color: #c8c6c4; }
.p4 { width: 132px; background: #fff; color: #252423; border-bottom: 4px solid #f2c811; padding-top: 2px; border-left-color: #c8c6c4; }
.padd { width: 39px; height: 32px; margin-top: 2px; background: #f2c811; display: flex; align-items: center; justify-content: center; }
.padd svg { width: 12px; height: 12px; }

/* visualizations */
.viz { width: 181px; flex: none; border-left: 1px solid #c8c6c4; border-right: 1px solid #d2d0ce; border-bottom: 1px solid #e1dfdd; display: flex; flex-direction: column; }
.v-head { height: 47px; display: flex; align-items: center; justify-content: space-between; padding: 0 11px 0 12px; font-size: 15.5px; flex: none; letter-spacing: 0; }
.v-grid { display: grid; grid-template-columns: repeat(6, 28px); grid-auto-rows: 24px; flex: none; height: 168px; }
.vc { display: flex; align-items: center; justify-content: center; }
.vc svg { width: 17px; height: 17px; }
.vc.sel svg { width: 22px; height: 22px; padding: 1.5px; border: 2.5px solid #6e6e6e; background: #dedcda; }
.vr { color: #2b7cd3; font-family: "Open Sans", sans-serif; font-size: 15px; font-weight: 700; letter-spacing: 0; }
.vdots { font-size: 14px; letter-spacing: 1.5px; line-height: 8px; padding-bottom: 8px; }
.vt123 { font-size: 7px; fill: #605e5c; text-anchor: middle; font-family: "Liberation Sans", sans-serif; }
.v-dash { height: 0; border-top: 1px dashed #d2d0ce; flex: none; margin-top: 7px; }
.v-apps { display: grid; grid-template-columns: 10px 10px; grid-auto-rows: 10px; padding: 3px 0 0 4px; height: 28px; flex: none; }
.sq.s1 { background: #cdc9e4; }
.sq.s2, .sq.s3 { background: #7b6cb5; }
.sq.s4 { background: #5c2d91; }
.v-tabs { height: 37px; border-top: 1px solid #d2d0ce; display: flex; flex: none; padding-left: 12px; }
.vt { width: 40px; display: flex; justify-content: center; padding-top: 7px; position: relative; }
.vt svg { width: 22px; height: 20px; }
.vt.on::after { content: ""; position: absolute; left: 0; right: 0; bottom: 0; height: 4px; background: #f2c811; border-radius: 2px; }
.v-search { margin: 4px 0 0 4px; width: 166px; height: 29px; }
.v-list { margin-top: 9px; border-top: 1px solid #e1dfdd; width: 175px; }
.v-row { height: 36px; border-bottom: 1px solid #e1dfdd; display: flex; align-items: center; padding-left: 8px; gap: 8px; white-space: nowrap; font-size: 11.5px; letter-spacing: -.05px; }
.dn { width: 9px; height: 9px; border: solid #605e5c; border-width: 0 1px 1px 0; transform: rotate(45deg) translate(-2px,-2px); margin-left: 1px; flex: none; }
.cnt { font-weight: 400; color: #8a6a1f; padding-left: 3px; }

/* fields */
.fields { flex: 1; display: flex; flex-direction: column; }
.c-head { height: 45px; display: flex; align-items: center; justify-content: space-between; padding: 0 8px 10px 9px; font-size: 15.5px; color: #252423; flex: none; letter-spacing: 0; }
.dbl { width: 14px; height: 12px; }
.c-search { margin-left: 5px; width: 172px; height: 27px; }
.c-search .mag { margin-right: 3px; margin-left: 7px; }
.tree { list-style: none; margin: 9px 0 0; padding: 0; }
.tree li { height: 24px; display: flex; align-items: center; white-space: nowrap; }
.t { padding-left: 8px; }
.rt { width: 8px; height: 8px; border: solid #8a8886; border-width: 1px 1px 0 0; transform: rotate(45deg); margin: 0 8px 0 -1px; flex: none; }
.dnt { width: 8px; height: 8px; border: solid #8a8886; border-width: 0 1px 1px 0; transform: rotate(45deg) translate(-2px,-2px); margin: 0 8px 0 -1px; flex: none; }
.tb { width: 14px; height: 12px; flex: none; margin-right: 5px; display: block; }
.tbwrap { position: relative; flex: none; }
.badge { position: absolute; left: 8px; top: 5px; width: 11px; height: 11px; background: #f2c811; border-radius: 50%; display: flex; }
.badge svg { width: 11px; height: 11px; }
.s { padding-left: 39px; }
.cb { width: 12px; height: 12px; border: 1px solid #8a8886; border-radius: 2px; flex: none; margin-right: 9px; display: flex; }
.cb.ck { background: #f2c811; border-color: #f2c811; }
.cb svg { width: 10px; height: 10px; }
.sig { width: 11px; margin-right: 6px; font-size: 15px; color: #252423; flex: none; line-height: 1; text-align: center; }
.calc { width: 11px; height: 15px; margin-right: 6px; flex: none; }

/* status */
.status { height: 24px; flex: none; display: flex; align-items: center; padding: 0 0 2px 5px; font-size: 11.5px; }
```
